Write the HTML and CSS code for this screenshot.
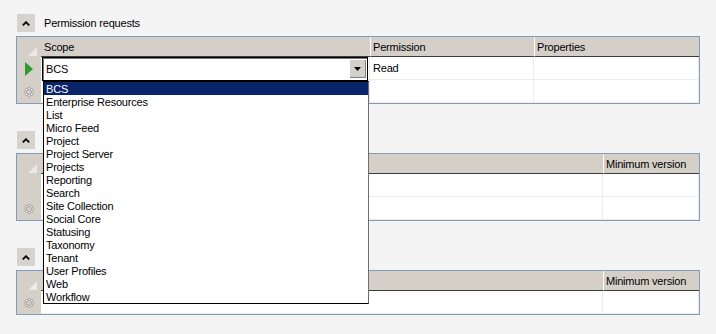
FILE: index.html
```html
<!DOCTYPE html>
<html>
<head>
<meta charset="utf-8">
<link rel="stylesheet" href="styles.css">
</head>
<body>
<div class="page">
  <section class="sec">
    <div class="sec-head">
      <button class="toggle"><svg width="8" height="5" viewBox="0 0 8 5"><polyline points="0.8,4.4 4,1.2 7.2,4.4" fill="none" stroke="#000" stroke-width="1.8"/></svg></button>
      <span class="sec-title">Permission requests</span>
    </div>
    <div class="grid">
      <div class="hdr">
        <div class="rh corner"><svg width="9" height="9" viewBox="0 0 9 9"><path d="M9 0L9 9L0 9Z" fill="#ebe9e5"/></svg></div>
        <div class="hc w-scope first">Scope</div>
        <div class="hc w-perm">Permission</div>
        <div class="hc w-prop">Properties</div>
      </div>
      <div class="row">
        <div class="rh"><svg width="8" height="14" viewBox="0 0 8 14"><path d="M0 0L8 7L0 14Z" fill="#2f9a2f"/></svg></div>
        <div class="cell w-scope combo-cell">
          <div class="combo">
            <span class="combo-text">BCS</span>
            <span class="combo-btn"><svg width="7" height="4" viewBox="0 0 7 4"><path d="M0 0L7 0L3.5 4Z" fill="#000"/></svg></span>
          </div>
          <ul class="dropdown">
            <li class="sel">BCS</li>
            <li>Enterprise Resources</li>
            <li>List</li>
            <li>Micro Feed</li>
            <li>Project</li>
            <li>Project Server</li>
            <li>Projects</li>
            <li>Reporting</li>
            <li>Search</li>
            <li>Site Collection</li>
            <li>Social Core</li>
            <li>Statusing</li>
            <li>Taxonomy</li>
            <li>Tenant</li>
            <li>User Profiles</li>
            <li>Web</li>
            <li>Workflow</li>
          </ul>
        </div>
        <div class="cell w-perm">Read</div>
        <div class="cell w-prop"></div>
      </div>
      <div class="row">
        <div class="rh"><svg class="newrow" width="10" height="10" viewBox="0 0 10 10"><g fill="#f4f4f4" stroke="#8e8e8e" stroke-width="0.7"><circle cx="8.4" cy="5" r="1.2"/><circle cx="7.4" cy="7.4" r="1.2"/><circle cx="5" cy="8.4" r="1.2"/><circle cx="2.6" cy="7.4" r="1.2"/><circle cx="1.6" cy="5" r="1.2"/><circle cx="2.6" cy="2.6" r="1.2"/><circle cx="5" cy="1.6" r="1.2"/><circle cx="7.4" cy="2.6" r="1.2"/></g></svg></div>
        <div class="cell w-scope"></div>
        <div class="cell w-perm"></div>
        <div class="cell w-prop"></div>
      </div>
    </div>
  </section>

  <section class="sec">
    <div class="sec-head">
      <button class="toggle"><svg width="8" height="5" viewBox="0 0 8 5"><polyline points="0.8,4.4 4,1.2 7.2,4.4" fill="none" stroke="#000" stroke-width="1.8"/></svg></button>
      <span class="sec-title"></span>
    </div>
    <div class="grid">
      <div class="hdr">
        <div class="rh corner"><svg width="9" height="9" viewBox="0 0 9 9"><path d="M9 0L9 9L0 9Z" fill="#ebe9e5"/></svg></div>
        <div class="hc w-name first"></div>
        <div class="hc w-ver">Minimum version</div>
      </div>
      <div class="row">
        <div class="rh"></div>
        <div class="cell w-name"></div>
        <div class="cell w-ver"></div>
      </div>
      <div class="row">
        <div class="rh"><svg class="newrow" width="10" height="10" viewBox="0 0 10 10"><g fill="#f4f4f4" stroke="#8e8e8e" stroke-width="0.7"><circle cx="8.4" cy="5" r="1.2"/><circle cx="7.4" cy="7.4" r="1.2"/><circle cx="5" cy="8.4" r="1.2"/><circle cx="2.6" cy="7.4" r="1.2"/><circle cx="1.6" cy="5" r="1.2"/><circle cx="2.6" cy="2.6" r="1.2"/><circle cx="5" cy="1.6" r="1.2"/><circle cx="7.4" cy="2.6" r="1.2"/></g></svg></div>
        <div class="cell w-name"></div>
        <div class="cell w-ver"></div>
      </div>
    </div>
  </section>

  <section class="sec">
    <div class="sec-head">
      <button class="toggle"><svg width="8" height="5" viewBox="0 0 8 5"><polyline points="0.8,4.4 4,1.2 7.2,4.4" fill="none" stroke="#000" stroke-width="1.8"/></svg></button>
      <span class="sec-title"></span>
    </div>
    <div class="grid">
      <div class="hdr">
        <div class="rh corner"><svg width="9" height="9" viewBox="0 0 9 9"><path d="M9 0L9 9L0 9Z" fill="#ebe9e5"/></svg></div>
        <div class="hc w-name first"></div>
        <div class="hc w-ver">Minimum version</div>
      </div>
      <div class="row">
        <div class="rh"><svg class="newrow" width="10" height="10" viewBox="0 0 10 10"><g fill="#f4f4f4" stroke="#8e8e8e" stroke-width="0.7"><circle cx="8.4" cy="5" r="1.2"/><circle cx="7.4" cy="7.4" r="1.2"/><circle cx="5" cy="8.4" r="1.2"/><circle cx="2.6" cy="7.4" r="1.2"/><circle cx="1.6" cy="5" r="1.2"/><circle cx="2.6" cy="2.6" r="1.2"/><circle cx="5" cy="1.6" r="1.2"/><circle cx="7.4" cy="2.6" r="1.2"/></g></svg></div>
        <div class="cell w-name"></div>
        <div class="cell w-ver"></div>
      </div>
    </div>
  </section>
</div>
</body>
</html>
```
FILE: styles.css
```css
* { box-sizing: border-box; }

body {
  margin: 0;
  background: #f4f4f4;
  font-family: "Liberation Sans", Arial, sans-serif;
  font-size: 11px;
  letter-spacing: -0.2px;
  color: #000;
}

.page {
  padding: 14px 16px 0 16px;
}

.sec + .sec {
  margin-top: 27px;
}

.sec-head {
  display: flex;
  align-items: center;
  height: 18px;
  margin-bottom: 4px;
}

.toggle {
  width: 18px;
  height: 18px;
  margin-left: 1px;
  padding: 0;
  border: 0;
  background: #d6d3ce;
  display: flex;
  align-items: center;
  justify-content: center;
}

.sec-title {
  margin-left: 9px;
}

.grid {
  border: 1px solid #7f9bbd;
  background: #fff;
}

.hdr {
  display: flex;
  height: 20px;
  background: #d4d0c8;
}

.row {
  display: flex;
  height: 23px;
}

.rh {
  width: 24px;
  flex: none;
  background: #d4d0c8;
  display: flex;
  align-items: center;
  justify-content: center;
}

.rh.corner {
  align-items: flex-end;
  justify-content: flex-end;
  padding: 0 4px 1px 0;
}

.newrow {
  margin-left: -1px;
}

.hc {
  flex: none;
  display: flex;
  align-items: center;
  padding-left: 2px;
  border-left: 1px solid #fff;
  border-bottom: 1px solid #3c3c3c;
}

.hc.first {
  border-left: 0;
  padding-left: 3px;
}

.cell {
  flex: none;
  display: flex;
  align-items: center;
  padding-left: 3px;
  border-right: 1px solid #ececec;
  border-bottom: 1px solid #ececec;
}

.w-scope { width: 329px; }
.w-perm { width: 164px; }
.w-prop { width: 165px; }
.w-name { width: 562px; }
.w-ver { width: 96px; }

.combo-cell {
  position: relative;
  padding: 0 0 0 1px;
  align-items: stretch;
}

.combo {
  flex: 1;
  display: flex;
  align-items: center;
  margin-right: 1px;
  height: 24px;
  background: #fff;
  border: 1px solid #000;
  box-shadow: inset 1px 1px 0 #7a7a7a;
  padding: 0 1px 0 3px;
}

.combo-text {
  flex: 1;
}

.combo-btn {
  width: 16px;
  height: 18px;
  background: #d4d0c8;
  display: flex;
  align-items: center;
  justify-content: center;
  border-right: 1px solid #808080;
  border-bottom: 1px solid #808080;
}

.dropdown {
  position: absolute;
  z-index: 10;
  left: 2px;
  top: 24px;
  width: 326px;
  margin: 0;
  padding: 0;
  list-style: none;
  background: #fff;
  border: 1px solid #000;
  border-right-color: #6e6e6e;
}

.dropdown li {
  height: 13px;
  line-height: 14px;
  padding-left: 2px;
  white-space: nowrap;
  overflow: hidden;
}

.dropdown li.sel {
  background: #0a246a;
  color: #fff;
}
```
